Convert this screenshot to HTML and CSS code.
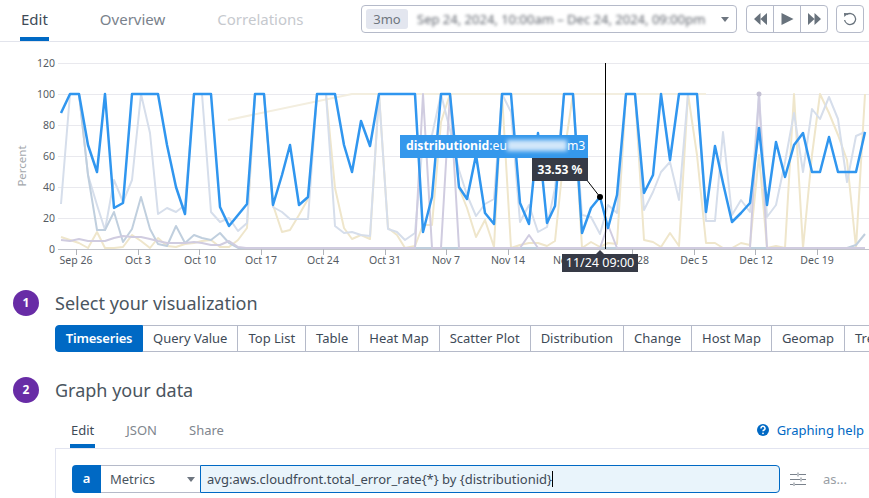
FILE: index.html
```html
<!DOCTYPE html>
<html>
<head>
  <title>Graph editor</title>
  <meta charset="UTF-8" />
  <link rel="stylesheet" href="styles.css">
</head>
<body>

  <!-- Top tabs and time controls -->
  <header class="topbar">
    <nav class="page-tabs">
      <a class="page-tab active">Edit</a>
      <a class="page-tab">Overview</a>
      <a class="page-tab disabled">Correlations</a>
    </nav>
    <div class="time-controls">
      <div class="date-picker">
        <span class="range-badge">3mo</span>
        <span class="range-text">Sep 24, 2024, 10:00am – Dec 24, 2024, 09:00pm</span>
        <span class="caret"></span>
      </div>
      <div class="player">
        <button class="player-btn">
          <svg width="13" height="12" viewBox="0 0 13 12"><path d="M6.500 0 V12 L0 6 Z M13 0 V12 L6.500 6 Z" /></svg>
        </button>
        <button class="player-btn">
          <svg width="13" height="12" viewBox="0 0 13 12"><path d="M0.500 0 L12.500 6 L0.500 12 Z" /></svg>
        </button>
        <button class="player-btn">
          <svg width="13" height="12" viewBox="0 0 13 12"><path d="M0 0 L6.500 6 L0 12 Z M6.500 0 L13 6 L6.500 12 Z" /></svg>
        </button>
      </div>
      <button class="reset-btn">
        <svg width="14" height="14" viewBox="0 0 14 14"><path class="reset-arc" d="M3.500 2.800 A5.500 5.500 0 1 1 1.600 8" /><path class="reset-head" d="M1 1 L5.200 1.200 L1.300 5 Z" /></svg>
      </button>
    </div>
  </header>

  <!-- Chart -->
  <div class="chart-wrap">
    <svg class="chart" width="869" height="248" viewBox="0 42 869 248">
      <g class="grid">
        <line x1="58" x2="869" y1="63.500" y2="63.500" />
        <line x1="58" x2="869" y1="94.500" y2="94.500" />
        <line x1="58" x2="869" y1="125.500" y2="125.500" />
        <line x1="58" x2="869" y1="156.500" y2="156.500" />
        <line x1="58" x2="869" y1="187.500" y2="187.500" />
        <line x1="58" x2="869" y1="218.500" y2="218.500" />
      </g>
      <g class="y-labels">
        <text x="55" y="67">120</text>
        <text x="55" y="98">100</text>
        <text x="55" y="129">80</text>
        <text x="55" y="160">60</text>
        <text x="55" y="191">40</text>
        <text x="55" y="222">20</text>
        <text x="55" y="253">0</text>
      </g>
      <text class="y-title" transform="translate(26 166) rotate(-90)">Percent</text>

      <polyline class="series beige faint" points="228,120 352,94 706,94" />
      <polyline class="series beige" points="61,237 70,240 79,243 88,248 97,232 105,248 114,248 123,247 132,235 141,241 150,248 158,238 167,246 176,247 185,244 194,243 202,241 211,240 220,247 229,247 238,240 247,228 255,94 264,94 273,205 282,232 290,230 299,215 308,199 317,94 326,94 335,188 344,228 352,239 361,235 370,239 379,94 388,228 397,235 405,248 415,246 423,225 432,225 441,122 450,94 459,188 467,208 476,237 485,220 494,247 502,94 511,248 520,245 529,243 538,243 547,246 555,241 564,155 573,94 582,248 591,242 600,247 608,243 617,244 626,94 635,94 644,240 653,242 661,247 670,233 679,246 688,94 697,155 706,243 715,243 723,248 732,248 741,243 750,245 759,155 767,248 776,246 785,248 794,94 803,248 812,155 820,94 829,113 838,135 847,160 856,248 865,94" />
      <polyline class="series mist" points="61,204 70,94 79,94 88,175 97,205 105,230 114,180 123,202 132,180 141,94 150,133 158,214 167,208 176,212 185,205 194,94 202,94 211,212 220,222 229,218 238,231 247,223 255,94 264,94 273,207 282,212 290,219 299,219 308,219 317,94 326,94 335,226 344,233 352,232 361,235 370,236 379,94 388,229 397,232 405,240 415,233 423,140 432,135 441,94 450,130 459,170 467,195 476,216 485,204 494,199 502,94 511,112 520,222 529,205 538,232 547,227 555,188 564,94 573,94 582,215 591,217 600,234 608,205 617,213 626,94 635,94 644,210 653,192 661,172 670,162 679,200 688,94 697,94 706,221 715,221 723,132 732,215 741,200 750,212 759,94 767,217 776,205 785,162 794,113 803,172 812,109 820,119 829,97 838,119 847,182 856,136 865,132" />
      <polyline class="series steel" points="79,94 88,175 97,230 105,230 114,212 123,242 132,229 141,197 150,229 158,244 167,246 176,226 185,243 194,235 202,238 211,240 220,233 229,243 238,248 847,248 856,245 865,234" />
      <polyline class="series lilac" points="61,240 70,241 79,239 88,241 97,241 105,241 114,238 123,236 132,237 141,237 150,239 158,241 167,243 176,243 185,243 194,242 202,243 211,245 220,245 229,241 238,247 246,248 415,248 423,94 432,248 441,248 450,94 459,248 520,248 529,235 538,248 600,248 608,225 617,248 750,248 759,94 767,248 865,248" />
      <circle class="lilac-dot" cx="759" cy="94" r="2.500" />
      <polyline class="series main" points="61,113 70,94 79,94 88,145 97,172 105,94 114,208 123,203 132,94 141,94 150,94 158,94 167,145 176,187 185,214 194,94 202,94 211,94 220,207 229,226 238,215 247,204 255,94 264,94 273,205 282,175 290,145 299,205 308,197 317,94 326,94 335,94 344,145 352,172 361,121 370,146 379,94 388,94 397,94 405,94 415,94 423,232 432,197 441,94 450,94 459,187 467,199 476,155 485,213 494,224 502,94 511,94 520,203 529,224 538,133 547,223 555,206 564,94 573,94 582,233 591,208 600,197 608,228 617,195 626,94 635,94 644,193 653,175 661,94 670,160 679,94 688,94 697,94 706,212 715,146 723,183 732,222 741,213 750,203 759,128 767,205 776,142 785,177 794,145 803,133 812,172 820,172 829,137 838,172 847,172 856,172 865,132" />

      <line class="axis" x1="58" x2="869" y1="249.500" y2="249.500" />
      <g class="ticks">
        <line x1="76.500" x2="76.500" y1="249" y2="255" />
        <line x1="138.500" x2="138.500" y1="249" y2="255" />
        <line x1="199.500" x2="199.500" y1="249" y2="255" />
        <line x1="261.500" x2="261.500" y1="249" y2="255" />
        <line x1="323.500" x2="323.500" y1="249" y2="255" />
        <line x1="385.500" x2="385.500" y1="249" y2="255" />
        <line x1="446.500" x2="446.500" y1="249" y2="255" />
        <line x1="508.500" x2="508.500" y1="249" y2="255" />
        <line x1="632.500" x2="632.500" y1="249" y2="255" />
        <line x1="694.500" x2="694.500" y1="249" y2="255" />
        <line x1="755.500" x2="755.500" y1="249" y2="255" />
        <line x1="817.500" x2="817.500" y1="249" y2="255" />
      </g>
      <g class="x-labels">
        <text x="76" y="264">Sep 26</text>
        <text x="138" y="264">Oct 3</text>
        <text x="200" y="264">Oct 10</text>
        <text x="261" y="264">Oct 17</text>
        <text x="323" y="264">Oct 24</text>
        <text x="385" y="264">Oct 31</text>
        <text x="446" y="264">Nov 7</text>
        <text x="508" y="264">Nov 14</text>
        <text x="570" y="264">Nov 21</text>
        <text x="632" y="264">Nov 28</text>
        <text x="694" y="264">Dec 5</text>
        <text x="756" y="264">Dec 12</text>
        <text x="817" y="264">Dec 19</text>
      </g>

      <line class="crosshair" x1="605.500" x2="605.500" y1="63" y2="249" />
      <line class="leader" x1="586" y1="179" x2="600" y2="197" />
      <circle class="marker" cx="600" cy="197" r="3" />
    </svg>

    <!-- Hover tooltip -->
    <div class="tip">
      <div class="tip-name">
        <b>distributionid</b>:eu<span class="tip-blur"></span>m3
      </div>
      <div class="tip-value">33.53 %</div>
    </div>
    <div class="time-label">11/24 09:00</div>
  </div>

  <!-- Step 1 -->
  <div class="step">
    <span class="step-num">1</span>
    <h2 class="step-title">Select your visualization</h2>
  </div>
  <div class="viz-tabs">
    <a class="viz-tab active">Timeseries</a>
    <a class="viz-tab">Query Value</a>
    <a class="viz-tab">Top List</a>
    <a class="viz-tab">Table</a>
    <a class="viz-tab">Heat Map</a>
    <a class="viz-tab">Scatter Plot</a>
    <a class="viz-tab">Distribution</a>
    <a class="viz-tab">Change</a>
    <a class="viz-tab">Host Map</a>
    <a class="viz-tab">Geomap</a>
    <a class="viz-tab">Treemap</a>
  </div>

  <!-- Step 2 -->
  <div class="step step-two">
    <span class="step-num">2</span>
    <h2 class="step-title">Graph your data</h2>
  </div>
  <div class="sub-tabs">
    <a class="sub-tab active">Edit</a>
    <a class="sub-tab">JSON</a>
    <a class="sub-tab">Share</a>
    <a class="help-link">
      <svg width="14" height="14" viewBox="0 0 14 14"><circle cx="7" cy="7" r="6" /><path class="help-mark" d="M5 5.500 A2 2 0 1 1 8 7 Q7 7.500 7 8.300" /><circle class="help-dot" cx="7" cy="10.300" r="0.900" /></svg>
      Graphing help
    </a>
  </div>
  <div class="query-panel">
    <div class="query-row">
      <span class="query-letter">a</span>
      <div class="query-source">Metrics<span class="caret"></span></div>
      <div class="query-input">avg:aws.cloudfront.total_error_rate{*} by {distributionid}<span class="text-cursor"></span></div>
      <svg class="query-options" width="16" height="14" viewBox="0 0 16 14">
        <path d="M0 2.500 H7 M9 2.500 H16 M0 7.500 H10 M12 7.500 H16 M0 12.500 H3 M5 12.500 H16 M8 0.500 V4.500 M11 5.500 V9.500 M4 10.500 V14" />
      </svg>
      <span class="query-alias">as...</span>
    </div>
  </div>

</body>
</html>
```

FILE: styles.css
```css
/* Page */
body {
  margin: 0;
  width: 869px;
  height: 498px;
  overflow: hidden;
  background: #fff;
  font-family: "Noto Sans", sans-serif;
  font-size: 13px;
  color: #3e4a57;
}

/* Top bar */
.topbar {
  display: flex;
  justify-content: space-between;
  height: 41px;
  border-bottom: 1px solid #e2e4ec;
  padding-left: 20px;
  padding-right: 5px;
}

.page-tabs {
  display: flex;
  gap: 50px;
}

.page-tab {
  height: 41px;
  box-sizing: border-box;
  padding: 8px 1px 0;
  font-size: 15px;
  line-height: 22px;
  color: #7a828c;
}

.page-tab.active {
  color: #3e4a57;
  border-bottom: 4px solid #0069c4;
}

.page-tab.disabled {
  color: #c6c9ce;
}

.time-controls {
  display: flex;
  gap: 8px;
  padding-top: 5px;
}

.date-picker {
  display: flex;
  align-items: center;
  width: 376px;
  height: 28px;
  box-sizing: border-box;
  border: 1px solid #b5bac9;
  border-radius: 4px;
  padding: 0 7px 0 4px;
}

.range-badge {
  width: 42px;
  height: 20px;
  border-radius: 3px;
  background: #e3e6ef;
  color: #6f7680;
  text-align: center;
  line-height: 20px;
}

.range-text {
  flex: 1;
  margin-left: 9px;
  font-size: 13px;
  color: #5f646d;
  white-space: nowrap;
  filter: blur(1.400px);
}

.caret {
  width: 0;
  height: 0;
  border-left: 4.500px solid transparent;
  border-right: 4.500px solid transparent;
  border-top: 5px solid #6e7680;
}

.player {
  display: flex;
  margin-left: 1px;
  height: 28px;
  box-sizing: border-box;
  border: 1px solid #b5bac9;
  border-radius: 4px;
}

.player-btn {
  display: flex;
  align-items: center;
  justify-content: center;
  width: 27px;
  padding: 0;
  border: 0;
  border-left: 1px solid #b5bac9;
  background: none;
}

.player-btn:first-child {
  width: 26px;
  border-left: 0;
}

.player-btn svg {
  fill: #68727c;
}

.reset-btn {
  display: flex;
  align-items: center;
  justify-content: center;
  width: 28px;
  height: 28px;
  padding: 0;
  border: 1px solid #b5bac9;
  border-radius: 4px;
  background: none;
}

.reset-arc {
  fill: none;
  stroke: #68727c;
  stroke-width: 1.300;
}

.reset-head {
  fill: #68727c;
}

/* Chart */
.chart-wrap {
  position: relative;
  height: 248px;
}

.chart {
  display: block;
}

.grid line {
  stroke: #e9e9ee;
  stroke-width: 1;
}

.y-labels text {
  font-size: 10.500px;
  fill: #555b63;
  text-anchor: end;
}

.y-title {
  font-size: 11.500px;
  fill: #a4a8ad;
  text-anchor: middle;
}

.x-labels text {
  font-size: 10.500px;
  fill: #555b63;
  text-anchor: middle;
}

.series {
  fill: none;
  stroke-width: 2;
  stroke-linejoin: round;
}

.beige {
  stroke: #efe6cb;
}

.faint {
  stroke: #f3eedf;
}

.mist {
  stroke: #d6deeb;
}

.steel {
  stroke: #c0cfde;
}

.lilac {
  stroke: #d0cce0;
}

.lilac-dot {
  fill: #c4c1d4;
}

.main {
  stroke: #3096ef;
  stroke-width: 2.500;
}

.axis {
  stroke: #c3c5cb;
  stroke-width: 1;
}

.ticks line {
  stroke: #b0b3b9;
  stroke-width: 1;
}

.crosshair,
.leader {
  stroke: #000;
  stroke-width: 1;
}

.marker {
  fill: #000;
}

/* Tooltip over the chart */
.tip {
  position: absolute;
  left: 400px;
  top: 93px;
  width: 188px;
}

.tip-name {
  height: 23px;
  box-sizing: border-box;
  padding-left: 6px;
  background: #3598ec;
  color: #fff;
  font-size: 12.200px;
  line-height: 22px;
  white-space: nowrap;
  overflow: hidden;
}

.tip-blur {
  display: inline-block;
  width: 60px;
  height: 11px;
  background: #d2e7fa;
  filter: blur(2px);
  vertical-align: -1px;
}

.tip-value {
  width: 56px;
  height: 23px;
  margin-left: auto;
  background: #363a46;
  color: #fff;
  font-size: 12px;
  font-weight: 700;
  line-height: 23px;
  text-align: center;
}

.time-label {
  position: absolute;
  left: 562px;
  top: 212px;
  width: 76px;
  height: 18px;
  background: #363a46;
  color: #fff;
  font-size: 12.500px;
  line-height: 18px;
  text-align: center;
}

.time-label::before {
  content: "";
  position: absolute;
  left: 34px;
  top: -4px;
  border-left: 4px solid transparent;
  border-right: 4px solid transparent;
  border-bottom: 4px solid #363a46;
}

/* Numbered steps */
.step {
  display: flex;
  align-items: center;
  gap: 16px;
  height: 26px;
  padding-left: 13px;
}

.step-two {
  margin-top: 25px;
}

.step-num {
  width: 26px;
  height: 26px;
  border-radius: 50%;
  background: #682ca6;
  color: #fff;
  font-size: 12px;
  font-weight: 700;
  line-height: 26px;
  text-align: center;
}

.step-title {
  margin: 0;
  font-size: 18px;
  font-weight: 400;
  color: #4a5560;
}

/* Visualization picker */
.viz-tabs {
  display: flex;
  margin-top: 9px;
  margin-left: 55px;
  height: 27px;
  overflow: hidden;
}

.viz-tab {
  flex: none;
  box-sizing: border-box;
  height: 27px;
  padding: 0 10px;
  border: 1px solid #b5bac9;
  border-left: 0;
  color: #3e4a57;
  line-height: 25px;
  white-space: nowrap;
}

.viz-tab.active {
  width: 88px;
  padding: 0;
  border: 1px solid #0069c4;
  border-radius: 4px 0 0 4px;
  background: #0069c4;
  color: #fff;
  font-weight: 600;
  letter-spacing: -0.200px;
  text-align: center;
}

/* Query editor tabs */
.sub-tabs {
  display: flex;
  gap: 30px;
  height: 28px;
  margin-top: 17px;
  padding-left: 70px;
  padding-right: 5px;
}

.sub-tab {
  padding: 1px 1px 0;
  height: 28px;
  box-sizing: border-box;
  color: #80868e;
  line-height: 18px;
}

.sub-tab.active {
  color: #3e4a57;
  border-bottom: 4px solid #0069c4;
}

.help-link {
  display: flex;
  align-items: flex-start;
  gap: 7px;
  margin-left: auto;
  color: #0069c4;
  line-height: 20px;
}

.help-link svg {
  margin-top: 3px;
  fill: #0069c4;
}

.help-mark {
  fill: none;
  stroke: #fff;
  stroke-width: 1.500;
}

.help-dot {
  fill: #fff;
}

.query-panel {
  height: 33px;
  margin-left: 55px;
  padding: 16px 0 0 16px;
  border-top: 1px solid #e2e4f0;
  border-left: 1px solid #e2e4f0;
}

.query-row {
  display: flex;
  align-items: center;
  height: 28px;
}

.query-letter {
  width: 29px;
  height: 28px;
  border-radius: 4px 0 0 4px;
  background: #0069c4;
  color: #fff;
  font-weight: 600;
  line-height: 27px;
  text-align: center;
}

.query-source {
  display: flex;
  align-items: center;
  justify-content: space-between;
  width: 99px;
  height: 28px;
  box-sizing: border-box;
  padding: 0 5px 0 9px;
  border: 1px solid #b5bac9;
  border-left: 0;
  border-right: 0;
  color: #4a5560;
}

.query-input {
  width: 580px;
  height: 28px;
  box-sizing: border-box;
  padding-left: 6px;
  border: 1px solid #0069c4;
  border-radius: 0 4px 4px 0;
  background: #e9f4fb;
  color: #3e4a57;
  line-height: 26px;
  white-space: nowrap;
}

.text-cursor {
  display: inline-block;
  width: 1px;
  height: 16px;
  background: #000;
  vertical-align: -3px;
}

.query-options {
  margin-left: 10px;
  stroke: #7a828c;
  fill: none;
}

.query-alias {
  margin-left: 17px;
  color: #999ea5;
}
```
